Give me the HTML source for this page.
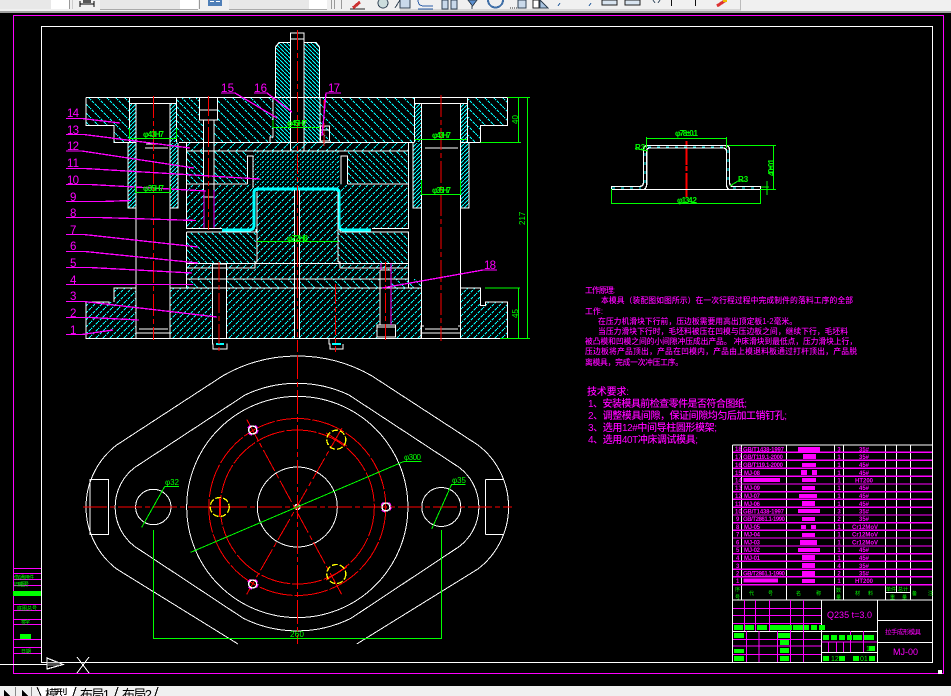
<!DOCTYPE html>
<html><head><meta charset="utf-8"><style>
html,body{margin:0;padding:0;background:#000;width:951px;height:696px;overflow:hidden}
svg{display:block}
text{font-family:"Liberation Sans","Noto Sans CJK SC",sans-serif}
.w{stroke:#fff;fill:none;stroke-width:1.2}
.g{fill:#0f0;font-size:8px}
.gs{fill:#0f0;font-size:5px}
.m{fill:#f0f;font-size:11.5px}
.t{fill:#f0f;font-size:7.8px;font-weight:500}
.r{fill:#f0f;font-size:10px;font-weight:500}
.c{fill:#f0f;font-size:6px;font-weight:bold}
.q{text-anchor:middle}
</style></head><body>
<svg width="951" height="696" viewBox="0 0 951 696" xmlns="http://www.w3.org/2000/svg" shape-rendering="crispEdges">
<defs>
<pattern id="a7" width="7" height="7" patternUnits="userSpaceOnUse"><path d="M-1,8L8,-1" stroke="#0ff" stroke-dasharray="3 1"/></pattern>
<pattern id="b7" width="7" height="7" patternUnits="userSpaceOnUse"><path d="M-1,-1L8,8" stroke="#0ff" stroke-dasharray="3 1"/></pattern>
<pattern id="a9" width="9" height="9" patternUnits="userSpaceOnUse"><path d="M-1,10L10,-1" stroke="#0ff" stroke-dasharray="3 1"/></pattern>
<pattern id="b9" width="9" height="9" patternUnits="userSpaceOnUse"><path d="M-1,-1L10,10" stroke="#0ff" stroke-dasharray="3 1"/></pattern>
<pattern id="a5" width="5" height="5" patternUnits="userSpaceOnUse"><path d="M-1,6L6,-1" stroke="#0ff" stroke-dasharray="3 1"/></pattern>
<pattern id="a4" width="4" height="4" patternUnits="userSpaceOnUse"><path d="M-1,5L5,-1" stroke="#0ff"/></pattern>
<pattern id="b4" width="4" height="4" patternUnits="userSpaceOnUse"><path d="M-1,-1L5,5" stroke="#0ff"/></pattern>
</defs>
<rect width="951" height="696" fill="#000"/>

<!-- toolbar -->
<rect width="951" height="11" fill="#f0f0f0"/>
<rect y="11" width="951" height="2" fill="#a0a0a0"/>
<rect y="0" width="51" height="9" fill="#e8e8e8"/><rect x="51" width="18" height="9" fill="#fff"/>
<path d="M69.500,0V9" stroke="#999"/><path d="M72.500,0V9" stroke="#ccc"/>
<path d="M80,4H94M80,1V7M94,1V7" stroke="#000"/><rect x="83" y="0" width="8" height="3" fill="#555"/>
<rect x="100" width="80" height="9" fill="#e8e8e8"/><rect x="180" width="18" height="9" fill="#fff"/>
<path d="M100,9.500H198" stroke="#aaa"/><path d="M199.500,0V9" stroke="#999"/>
<rect x="208" y="0" width="14" height="6" fill="#4f7fb8"/><rect x="210" y="1" width="4" height="1" fill="#fff"/><rect x="216" y="1" width="4" height="1" fill="#fff"/>
<rect x="229" width="80" height="9" fill="#e8e8e8"/><rect x="309" width="18" height="9" fill="#fff"/>
<path d="M229,9.500H327" stroke="#aaa"/><path d="M331.500,0V9M334.500,0V9M341.500,0V9" stroke="#999"/>
<path d="M350,9H365" stroke="#222"/><path d="M353,8L360,2" stroke="#c33" stroke-width="3"/>
<circle cx="383" cy="3" r="5" fill="#cdd" stroke="#345"/>
<path d="M395,8L400,0" stroke="#345"/>
<path d="M400,0V8H410V0" fill="#c9d9ea" stroke="#345"/>
<path d="M418,9H433M418,0Q418,6 424,6H433" fill="none" stroke="#2a5da8"/>
<rect x="442" y="0" width="6" height="9" fill="#c9d9ea" stroke="#345"/><rect x="451" y="0" width="6" height="9" fill="#c9d9ea" stroke="#345"/>
<path d="M468,0H477L472.500,6ZM472,6V9" fill="#5b8fd0" stroke="#345"/>
<path d="M488,0A7.500,7.500 0 0 0 503,0" fill="none" stroke="#4070a8" stroke-width="2"/>
<rect x="518" y="0" width="8" height="8" fill="#c9d9ea" stroke="#345"/><path d="M510,8H518" stroke="#333" stroke-dasharray="1 1"/>
<rect x="533" y="0" width="6" height="8" fill="#fff" stroke="#222"/><path d="M540,0L548,8H540Z" fill="#a9c4e0" stroke="#345"/>
<path d="M560,3L558,6M591,3L589,6" stroke="#4070a8"/>
<rect x="602" y="0" width="15" height="5" fill="#d8e4f0" stroke="#222"/><rect x="625" y="0" width="15" height="5" fill="#d8e4f0" stroke="#222"/>
<path d="M653,0L655,3M660,0L658,3" stroke="#567"/>
<path d="M671.500,0V6M695.500,0V6" stroke="#111"/>
<path d="M717,6L726,0" stroke="#d33" stroke-width="3"/><rect x="723" y="0" width="4" height="2" fill="#eb0"/>
<path d="M740.500,0V10H400" fill="none" stroke="#bbb"/>

<!-- outer frames -->
<path d="M13.500,673.500V15.500H943.500V673.500Z" fill="none" stroke="#f0f" stroke-width="1.300"/>
<path d="M41.500,662.500V26.500H932.500V662.500Z" fill="none" stroke="#fff" stroke-width="1.300"/>
<path d="M0,664.500H47" stroke="#fff"/>
<rect x="938" y="670" width="4" height="4" fill="#fff"/>

<!-- hatches of the section -->
<polygon points="86,97.500 129,97.500 129,142.500 114,142.500 114,125.600 86,125.600" fill="url(#b9)"/>
<rect x="129" y="103" width="7" height="39" fill="url(#a4)"/>
<rect x="170" y="103" width="7" height="39" fill="url(#a4)"/>
<rect x="128" y="143" width="8" height="65" fill="url(#a4)"/>
<rect x="170" y="143" width="8" height="65" fill="url(#a4)"/>
<rect x="177" y="97.500" width="22" height="45" fill="url(#b7)"/>
<rect x="177" y="120" width="26" height="22.500" fill="url(#b7)"/>
<rect x="214" y="97.500" width="59" height="45" fill="url(#b9)"/>
<polygon points="275.500,47 279,42.500 290.500,42.500 290.500,142.500 275.500,142.500" fill="url(#b4)"/>
<polygon points="304,42.500 316,42.500 319.500,47 319.500,142.500 304,142.500" fill="url(#b4)"/>
<rect x="320" y="97.500" width="94.500" height="45" fill="url(#b9)"/>
<rect x="414.500" y="103" width="7" height="39" fill="url(#a4)"/>
<rect x="460.500" y="103" width="7" height="39" fill="url(#a4)"/>
<rect x="413" y="143" width="8.500" height="65" fill="url(#a4)"/>
<rect x="460.500" y="143" width="8" height="65" fill="url(#a4)"/>
<polygon points="467.500,97.500 507.500,97.500 507.500,125.600 480.500,125.600 480.500,142.500 467.500,142.500" fill="url(#b9)"/>
<rect x="187" y="143" width="221" height="8" fill="url(#a9)"/>
<rect x="187" y="151" width="60" height="33" fill="url(#b7)"/>
<rect x="253" y="151" width="87" height="37" fill="url(#a5)"/>
<rect x="348" y="151" width="60" height="33" fill="url(#b7)"/>
<rect x="187" y="184" width="66" height="44.500" fill="url(#a7)"/>
<rect x="340" y="184" width="68" height="44.500" fill="url(#a7)"/>
<rect x="257" y="190" width="81" height="89" fill="url(#a7)"/>
<rect x="187" y="232" width="70" height="31" fill="url(#b7)"/>
<rect x="338" y="232" width="70" height="31" fill="url(#b7)"/>
<rect x="187" y="264" width="70" height="15" fill="url(#a7)"/>
<rect x="338" y="264" width="70" height="15" fill="url(#a7)"/>
<rect x="187" y="279" width="234" height="9" fill="url(#b9)"/>
<rect x="170" y="288" width="251" height="50.500" fill="url(#a7)"/>
<polygon points="86,302 114,302 114,288 135.500,288 135.500,338.500 86,338.500" fill="url(#a7)"/>
<polygon points="460.500,288 480.500,288 480.500,305.500 485.500,305.500 485.500,302 507.500,302 507.500,338.500 460.500,338.500" fill="url(#a7)"/>

<!-- black holes over hatches -->
<rect x="199.500" y="98" width="18" height="22" fill="#000"/>
<rect x="203.500" y="120" width="10.500" height="108" fill="#000"/>
<rect x="247.500" y="156" width="5.500" height="28" fill="#000"/>
<rect x="341" y="156" width="6.500" height="28" fill="#000"/>
<rect x="213" y="263.500" width="13.500" height="75" fill="#000"/>
<rect x="380" y="270" width="11" height="68" fill="#000"/>
<rect x="377" y="325" width="19" height="13" fill="#000"/>
<rect x="294.500" y="190" width="5" height="148" fill="#000"/>

<!-- workpiece -->
<path d="M222,230H249Q254,230 254,225V193Q254,189 258,189H335Q339,189 339,193V225Q339,230 344,230H371" fill="none" stroke="#0ff" stroke-width="3"/>

<!-- section outlines -->
<path class="w" d="M86,97.500H467.500M467.500,97.500H507.500V125.600H480.500V142.500H460.500M86,97.500V125.600H114V142.500H136M129.500,97.500V142.500M136,103.500H170V142.500M136,103.500V338.500M176.500,97.500V142.500M170,142.500V338.500M129,103.500H176.500"/>
<path class="w" d="M128,143V208H136M178,143V208H170M179,142.500H414M145,148H168M146,144H158"/>
<path class="w" d="M199.500,97.500V120H217.500V97.500M199.500,110H217.500M203.500,120V190M214,120V190M203,197H214"/>
<path class="w" d="M273,97.500V137H270V142.500M290.500,33H304V151H290.500ZM275.500,97V47L279,42.500H290.500M304,42.500H316L319.500,47V97.500M320,97.500V142.500M290.500,39H304"/>
<path class="w" d="M320.500,126H329.500V141H320.500ZM320.500,130H329.500"/>
<path class="w" d="M414.500,97.500V142.500M421.500,103.500V338.500M460.500,103.500V338.500M467.500,97.500V142.500M414.500,103.500H467.500M413,143V208H421M469,143V208H460M425,148H458"/>
<path class="w" d="M186.500,142.500V228.500H222M186.500,151H290M304,151H408.500M408.500,142.500V228.500H372M247.500,184V156H253V188M341,184V156H347.500V184M186.500,184H247.500M347.500,184H408.500"/>
<path class="w" d="M186.500,232H256V229M340,229V232H408.500V263.500M186.500,232V288M186.500,263.500H408.500M186.500,279H408.500M408.500,263.500V288"/>
<path class="w" d="M257,192V262M338,192V262M257,262H255V268H186.500M338,262H340V268H408.500"/>
<path class="w" d="M294.500,190V338.500M299.500,190V338.500"/>
<path class="w" d="M114,302V288H135.500M170,288H421M460.500,288H480.500V305.500H485.500V302H507.500V338.500H86V302H109V305.500M136,333H170M139,329H168M421.500,333H460.500M425,329H458M421,338.500V326H424M460.500,326H458"/>
<path class="w" d="M212.500,263.500V338.500M226.500,263.500V338.500M212.500,264H226.500M380,270H391M380,270V325M391,270V325M377,325H395.500V337H377ZM377,327H395.500"/>
<path class="w" d="M212.500,339V344H213V349H227V344H226.500M329,339V344H330V349H343V344"/>
<path d="M216,344H224M332,344H341" stroke="#0ff" stroke-width="2"/>
<path d="M381,263V270M391,263V325" stroke="#f0f" stroke-width="1.300"/>
<path d="M204,190V228M214,190V228" stroke="#f0f" stroke-width="1.300"/>

<!-- red centre lines -->
<g stroke="#f00" fill="none">
<path d="M153.500,96V340M441,95V341" stroke-dasharray="22 3 5 3"/>
<path d="M208.500,96V230M219,262V351M297.500,30V352M335.500,284V352M385.500,262V340M324,100V146" stroke-dasharray="20 3 5 3"/>
<path d="M686.500,141V165M686.500,166V171M686.500,173V197" stroke-width="1.600"/>
</g>

<!-- magenta leaders and numbers -->
<g stroke="#f0f" stroke-width="1.300" fill="none">
<path d="M66,118.500H82L120,123"/><path d="M66,134.500H84L190,148"/><path d="M66,151H82L194,168"/>
<path d="M66,168.500H85L260,179"/><path d="M66,184.500H90L206,191"/><path d="M66,201.500H103L131,200.500"/>
<path d="M66,217.500H99L196,220.500"/><path d="M66,234.500H84L198,247"/><path d="M66,251.500H85L198,263"/>
<path d="M66,267.500H90L192,273"/><path d="M66,284.500H193"/><path d="M66,301.500H84L217,317"/>
<path d="M66,317.500H90L139,320"/><path d="M66,334.500H82L113,330"/>
<path d="M221,93H235L277,118"/><path d="M254,93H267L292,112"/><path d="M341,93H326L322,136"/>
<path d="M497,270H483L382,288"/>
</g>
<text x="67" y="117" class="m" textLength="12">14</text><text x="67" y="134" class="m" textLength="12">13</text><text x="67" y="150" class="m" textLength="12">12</text>
<text x="67" y="167" class="m" textLength="12">11</text><text x="67" y="184" class="m" textLength="12">10</text><text x="70" y="201" class="m">9</text>
<text x="70" y="217" class="m">8</text><text x="70" y="234" class="m">7</text><text x="70" y="250" class="m">6</text>
<text x="70" y="267" class="m">5</text><text x="70" y="284" class="m">4</text><text x="70" y="300" class="m">3</text>
<text x="70" y="317" class="m">2</text><text x="70" y="334" class="m">1</text>
<text x="221" y="92" class="m" textLength="13">15</text><text x="254" y="92" class="m" textLength="13">16</text><text x="328" y="92" class="m" textLength="12">17</text><text x="484" y="269" class="m" textLength="12">18</text>

<!-- green section dims -->
<g stroke="#0f0" fill="none">
<path d="M129.500,128V138.500H176.500V128M135.500,186V192.500H170.500V186M273,120V127.500H320"/>
<path d="M414.500,139.500H467M421.500,180V194.500H460.500V180"/>
<path d="M518.500,97.500V142.500M527.500,97.500V338.500M518.500,288V338.500M507.500,97.500H530M480.500,142.500H521M485,288H520M500,338.500H530"/>
<path d="M257,241.500H338"/>
</g>
<text x="143" y="137" class="g" textLength="21" font-weight="bold">φ43H7</text>
<text x="143" y="191" class="g" textLength="21" font-weight="bold">φ35H7</text>
<text x="287" y="126" class="g" textLength="20" font-weight="bold">φ45H7</text>
<text x="432" y="138" class="g" textLength="19" font-weight="bold">φ43H7</text>
<text x="432" y="193" class="g" textLength="19" font-weight="bold">φ35H7</text>
<text x="287" y="241" class="g" textLength="21" font-weight="bold">φ72H8</text>
<text transform="translate(518,124) rotate(-90)" class="g">40</text>
<text transform="translate(525,225) rotate(-90)" class="g">217</text>
<text transform="translate(518,318) rotate(-90)" class="g">45</text>

<!-- part profile -->
<g fill="none" stroke="#fff" stroke-width="1.300">
<path d="M611.500,189.500V186.500H640Q643.500,186 643.500,182V150Q643.500,145.500 648,145.500H725Q729.500,145.500 729.500,150V182Q729.500,186.500 733,186.500H760.500V189.500"/>
<path d="M611.500,189.500H760.500M644,189.500Q646.700,188 646.700,184V151Q646.700,148 650,148H723Q726.500,148 726.500,151V184Q726.500,188 729,189.500"/>
</g>
<path d="M612,188H641M645,183V150M648,147H725M728,150V183M733,188H760" stroke="#0ff" stroke-dasharray="3 6" fill="none"/>
<g fill="none" stroke="#0f0">
<path d="M646.500,137V148M726.500,137V148M646,138.500H727M611.500,189V204M760.500,189V204M611,203.500H761M728,145.500H776M761,189.500H776M773.500,145.500V189.500M767,181V195M761,187H769"/>
<path d="M635,148.500L648,151M730,186L738,181H745"/>
</g>
<text x="675" y="136" class="g" textLength="23" font-weight="bold">φ78±0.1</text>
<text x="677" y="203" class="g" textLength="20" font-weight="bold">φ134.2</text>
<text x="635" y="150" class="g" font-weight="bold">R3</text>
<text x="738" y="182" class="g" font-weight="bold">R3</text>
<text transform="translate(774,176) rotate(-90)" class="g" textLength="17" font-weight="bold">40±0.1</text>

<!-- notes -->
<text x="585" y="293" class="t" textLength="30">工作原理:</text>
<text x="601" y="303" class="t" textLength="252">本模具（装配图如图所示）在一次行程过程中完成制件的落料工序的全部</text>
<text x="585" y="314" class="t" textLength="18">工作:</text>
<text x="598" y="324" class="t" textLength="199">在压力机滑块下行前，压边板需要用高出顶定板1-2毫米。</text>
<text x="598" y="334" class="t" textLength="250">当压力滑块下行时，毛坯料被压在凹模与压边板之间，继续下行，毛坯料</text>
<text x="585" y="344" class="t" textLength="272">被凸模和凹模之间的小间隙冲压成出产品。 冲床滑块到最低点，压力滑块上行，</text>
<text x="585" y="354" class="t" textLength="272">压边板将产品顶出，产品在凹模内，产品由上模退料板通过打杆顶出，产品脱</text>
<text x="585" y="365" class="t" textLength="98">离模具，完成一次冲压工序。</text>
<text x="587" y="395" class="r" textLength="42">技术要求:</text>
<text x="588" y="407" class="r" textLength="159">1、安装模具前检查零件是否符合图纸;</text>
<text x="588" y="419" class="r" textLength="199">2、调整模具间隙，保证间隙均匀后加工销钉孔;</text>
<text x="588" y="431" class="r" textLength="129">3、选用12#中间导柱圆形模架;</text>
<text x="588" y="443" class="r" textLength="110">4、选用40T冲床调试模具;</text>

<!-- plan view -->
<g fill="none" stroke="#fff">
<path d="M238,644L116.700,569A78,78 0 0 1 116.700,445L223,375.700A150,150 0 0 1 371.600,375.700L477.900,445A78,78 0 0 1 477.900,569L356.700,644"/>
<path d="M243.300,618.300L135,546.700A49.600,49.600 0 0 1 135,467.300L245,395A121.500,121.500 0 0 1 349,395L459,467.300A49.600,49.600 0 0 1 459,546.700L351,618.300A121.500,121.500 0 0 1 243.300,618.300Z"/>
<circle cx="297.300" cy="507" r="110.600"/>
<circle cx="297.300" cy="507" r="40"/>
<circle cx="153.300" cy="507" r="17.700"/>
<circle cx="441.300" cy="507" r="19.500"/>
<path d="M108.300,479.500H90V534.500H108.300ZM485.700,479.500H503.300M485.700,534.500H503.300M485.700,479.500V534.500"/>
<circle cx="297.300" cy="507" r="2.500" stroke-width="1.500"/>
</g>
<g fill="none" stroke="#f00">
<circle cx="297.300" cy="507" r="88.500" stroke-dasharray="34 2"/>
<circle cx="297.300" cy="507" r="77" stroke-dasharray="30 2"/>
<path d="M83,507H512M297.300,355V644" stroke-dasharray="24 3 5 3"/>
<path d="M246.700,419.300L342,595M342,428L246.700,594.300" stroke-dasharray="24 3 5 3"/>
<path d="M207,507H232M219.700,497V517M326,433L347,446M326,580L347,567"/>
</g>
<g fill="none">
<circle cx="336.300" cy="439.700" r="9.500" stroke="#ff0" stroke-width="1.300" stroke-dasharray="6 2"/>
<circle cx="219.700" cy="507" r="9.500" stroke="#ff0" stroke-width="1.300" stroke-dasharray="6 2"/>
<circle cx="336.300" cy="574" r="9.500" stroke="#ff0" stroke-width="1.300" stroke-dasharray="6 2"/>
<circle cx="252.700" cy="430" r="4" stroke="#fff" stroke-width="1.400"/>
<circle cx="386" cy="507" r="4" stroke="#fff" stroke-width="1.400"/>
<circle cx="252.700" cy="584" r="4" stroke="#fff" stroke-width="1.400"/>
<circle cx="252.700" cy="430" r="5.200" stroke="#f0f" stroke-dasharray="4 5"/>
<circle cx="386" cy="507" r="5.200" stroke="#f0f" stroke-dasharray="4 5"/>
<circle cx="252.700" cy="584" r="5.200" stroke="#f0f" stroke-dasharray="4 5"/>
</g>
<g fill="none" stroke="#0f0">
<path d="M190.700,552.300L403.300,461.700"/>
<path d="M403.300,461.500H421.700M165,486.500H179M451.700,484.500H465.700"/>
<path d="M141.700,527.300L165,486"/>
<path d="M431.700,529L451.700,484.300"/>
<path d="M153.500,530V638.500H441.500V530" stroke-width="1.200"/>
</g>
<text x="404" y="460" class="g" textLength="17">φ300</text>
<text x="165" y="485" class="g" textLength="14">φ32</text>
<text x="452" y="483" class="g" textLength="14">φ35</text>
<text x="290" y="637" class="g" textLength="14">260</text>

<!-- parts table -->
<g stroke="#fff" fill="none" stroke-width="1.200">
<path d="M732.500,445H932.500M732.500,445V662.500M741.500,445V600M786.500,445V600M834.500,445V600M843.500,445V600M885.500,445V600M896.500,445V592.500M910.500,445V600M885.500,592.500H910.500M732.500,600H932.500M732.500,662.500H932.500"/>
<path d="M821.500,600V662.500M877.500,600V662.500M877.500,620.500H932.500M877.500,642.500H932.500M821.500,631.500H877.500M821.500,652.500H877.500M733,631.500H821"/>
</g>
<g stroke="#f0f" fill="none" stroke-width="1.200">
<path d="M733,452.300H932M733,460.300H932M733,468.300H932M733,476.300H932M733,484H932M733,491.700H932M733,499.300H932M733,507.300H932M733,515H932M733,522.700H932M733,530.300H932M733,538H932M733,546H932M733,553.700H932M733,561.300H932M733,569.300H932M733,576.700H932M733,584.700H932"/>
<path d="M733,608.500H821M733,615.500H821M733,623.500H821M733,639.500H821M733,646H821M733,654.500H821"/>
<path d="M744.500,600V631M755.500,600V631M769.500,600V631M790.500,600V662M803.500,600V662M746.500,631V662M759,631V662M777.500,631V662"/>
<path d="M821.500,642H877M850.500,631V652M863.500,631V652M828.500,642V652M836.500,642V652M843.500,642V652"/>
</g>
<text x="735" y="451" class="c" font-size="5.500">18</text><text x="743" y="451.500" class="c" textLength="41">GB/T1438-1997</text>
<text x="735" y="459" class="c" font-size="5.500">17</text><text x="743" y="459" class="c" textLength="40">GB/T119.1-2000</text>
<text x="735" y="467" class="c" font-size="5.500">16</text><text x="743" y="467" class="c" textLength="40">GB/T119.1-2000</text>
<text x="735" y="475" class="c" font-size="5.500">15</text><text x="744" y="475" class="c" textLength="16">MJ-08</text>
<text x="735" y="482.500" class="c" font-size="5.500">14</text>
<text x="735" y="490" class="c" font-size="5.500">13</text><text x="744" y="490" class="c" textLength="16">MJ-09</text>
<text x="735" y="498" class="c" font-size="5.500">12</text><text x="744" y="498" class="c" textLength="16">MJ-07</text>
<text x="735" y="506" class="c" font-size="5.500">11</text><text x="744" y="506" class="c" textLength="16">MJ-06</text>
<text x="735" y="513.500" class="c" font-size="5.500">10</text><text x="743" y="513.500" class="c" textLength="41">GB/T1438-1997</text>
<text x="736" y="521" class="c" font-size="5.500">9</text><text x="743" y="521" class="c" textLength="42">GB/T2861.1-1990</text>
<text x="736" y="529" class="c" font-size="5.500">8</text><text x="744" y="529" class="c" textLength="16">MJ-05</text>
<text x="736" y="536.500" class="c" font-size="5.500">7</text><text x="744" y="536.500" class="c" textLength="16">MJ-04</text>
<text x="736" y="544.500" class="c" font-size="5.500">6</text><text x="744" y="544.500" class="c" textLength="16">MJ-03</text>
<text x="736" y="552" class="c" font-size="5.500">5</text><text x="744" y="552" class="c" textLength="16">MJ-02</text>
<text x="736" y="560" class="c" font-size="5.500">4</text><text x="744" y="560" class="c" textLength="16">MJ-01</text>
<text x="736" y="568" class="c" font-size="5.500">3</text>
<text x="736" y="575.500" class="c" font-size="5.500">2</text><text x="743" y="575.500" class="c" textLength="42">GB/T2861.1-1990</text>
<text x="736" y="583" class="c" font-size="5.500">1</text>
<g fill="#f0f">
<rect x="743.300" y="478" width="36.700" height="4"/><rect x="743.300" y="578.500" width="34.700" height="4"/>
<rect x="798" y="447" width="22" height="4.500"/><rect x="803" y="454" width="13" height="5"/><rect x="802" y="463" width="14" height="4"/>
<rect x="801" y="470" width="6" height="5"/><rect x="812" y="470" width="5" height="5"/><rect x="802" y="478" width="14" height="4"/>
<rect x="802" y="486" width="13" height="4"/><rect x="799" y="494" width="18" height="4"/><rect x="802" y="501" width="13" height="5"/>
<rect x="798" y="509" width="22" height="4"/><rect x="802" y="517" width="13" height="4"/><rect x="801" y="525" width="5" height="4"/>
<rect x="811" y="525" width="5" height="4"/><rect x="802" y="533" width="13" height="4"/><rect x="800" y="540" width="17" height="5"/>
<rect x="798" y="548" width="22" height="4"/><rect x="802" y="555" width="13" height="5"/><rect x="802" y="563" width="13" height="5"/>
<rect x="802" y="571" width="13" height="5"/><rect x="802" y="579" width="13" height="4"/>
</g>
<text x="839" y="451.500" class="c q">3</text><text x="864" y="451.500" class="c q">35#</text>
<text x="839" y="459" class="c q">1</text><text x="864" y="459" class="c q">35#</text>
<text x="839" y="467" class="c q">1</text><text x="864" y="467" class="c q">45#</text>
<text x="839" y="475" class="c q">1</text><text x="864" y="475" class="c q">45#</text>
<text x="839" y="482.500" class="c q">1</text><text x="864" y="482.500" class="c q">HT200</text>
<text x="839" y="490" class="c q">1</text><text x="864" y="490" class="c q">45#</text>
<text x="839" y="498" class="c q">1</text><text x="864" y="498" class="c q">45#</text>
<text x="839" y="506" class="c q">1</text><text x="864" y="506" class="c q">45#</text>
<text x="839" y="513.500" class="c q">3</text><text x="864" y="513.500" class="c q">35#</text>
<text x="839" y="521" class="c q">2</text><text x="864" y="521" class="c q">35#</text>
<text x="839" y="529" class="c q">1</text><text x="865" y="529" class="c q">Cr12MoV</text>
<text x="839" y="536.500" class="c q">1</text><text x="865" y="536.500" class="c q">Cr12MoV</text>
<text x="839" y="544.500" class="c q">1</text><text x="865" y="544.500" class="c q">Cr12MoV</text>
<text x="839" y="552" class="c q">1</text><text x="864" y="552" class="c q">45#</text>
<text x="839" y="560" class="c q">1</text><text x="864" y="560" class="c q">45#</text>
<text x="839" y="568" class="c q">4</text><text x="864" y="568" class="c q">35#</text>
<text x="839" y="575.500" class="c q">2</text><text x="864" y="575.500" class="c q">35#</text>
<text x="839" y="583" class="c q">1</text><text x="864" y="583" class="c q">HT200</text>
<!-- table header -->
<text x="735" y="591" class="gs">序</text><text x="735" y="599" class="gs">号</text>
<text x="749" y="595" class="gs">代</text><text x="768" y="595" class="gs">号</text>
<text x="796" y="595" class="gs">名</text><text x="816" y="595" class="gs">称</text>
<text x="836" y="592" class="gs">数</text><text x="836" y="599" class="gs">量</text>
<text x="855" y="595" class="gs">材</text><text x="868" y="595" class="gs">料</text>
<text x="886" y="591" class="gs">单件</text><text x="898" y="591" class="gs">总计</text>
<text x="890" y="599" class="gs">重</text><text x="902" y="599" class="gs">量</text>
<text x="912" y="595" class="gs">备</text><text x="928" y="595" class="gs">注</text>
<!-- title block -->
<g fill="#0f0">
<rect x="734" y="625" width="9" height="5"/><rect x="745" y="625" width="9" height="5"/><rect x="757" y="625" width="10" height="5"/><rect x="770" y="625" width="22" height="5"/><rect x="793" y="625" width="10" height="5"/><rect x="804" y="625" width="5" height="5"/><rect x="811" y="625" width="6" height="5"/><rect x="819" y="625" width="6" height="5"/>
<rect x="734" y="633" width="10" height="5"/><rect x="778" y="633" width="12" height="5"/><rect x="780" y="640" width="9" height="5"/><rect x="780" y="648" width="9" height="5"/><rect x="734" y="649" width="10" height="4"/><rect x="734" y="656" width="10" height="5"/><rect x="780" y="656" width="9" height="5"/>
<rect x="823" y="635" width="6" height="5"/><rect x="831" y="635" width="6" height="5"/><rect x="839" y="635" width="6" height="5"/><rect x="847" y="635" width="5" height="5"/><rect x="853" y="635" width="9" height="5"/><rect x="864" y="635" width="10" height="5"/>
<rect x="823" y="656" width="6" height="5"/><rect x="839" y="656" width="6" height="5"/><rect x="853" y="656" width="6" height="5"/><rect x="869" y="656" width="6" height="5"/><rect x="869" y="646" width="6" height="5"/>
</g>
<text x="831" y="661" fill="#0f0" font-size="7">12</text>
<text x="860" y="661" fill="#0f0" font-size="7">01</text>
<text x="866" y="651" fill="#0f0" font-size="7">1</text>
<text x="827" y="618" fill="#f0f" font-size="9" textLength="45">Q235 t=3.0</text>
<text x="885" y="634" fill="#f0f" font-size="6.500" textLength="36">拉手成形模具</text>
<text x="893" y="655" fill="#f0f" font-size="9" textLength="25">MJ-00</text>

<!-- left strip -->
<g stroke="#f0f" fill="none" stroke-width="1.200">
<path d="M13,568.500H41M13,573.500H41M13,579.500H41M13,585.500H41M13,604.500H41M13,610.500H41M13,619.500H41M13,624.500H41M13,639.500H41M13,647.500H41M13,653.500H41"/>
</g>
<rect x="13" y="591" width="28" height="5" fill="#0f0"/>
<rect x="20" y="634" width="11" height="5" fill="#0f0"/>
<text x="14" y="579" class="gs" textLength="20">借(通)用件</text>
<text x="14" y="586" class="gs" textLength="15">旧底图号</text>
<text x="17" y="610" class="gs" textLength="20">底图总号</text>
<text x="21" y="624" class="gs" textLength="9">签字</text>
<text x="21" y="653" class="gs" textLength="10">日期</text>

<!-- UCS icon + x -->
<path d="M47,658L63,664.500L47,669Z" fill="none" stroke="#fff" stroke-width="1.200"/>
<path d="M47,663H60M47,665H60" stroke="#999"/>
<path d="M77,657L89,673M89,657L77,673" stroke="#fff"/>

<!-- bottom tab bar -->
<rect y="686" width="951" height="10" fill="#f0f0f0"/>
<path d="M4,690L10,696H4ZM22,690L28,696H22Z" fill="#000"/><path d="M15.500,687V696M31.500,687V696" stroke="#888"/>
<rect x="40" y="687" width="34" height="9" fill="#fff"/>
<path d="M37,687L41,696M76,687L73,696M118,687L115,696M158,687L155,696" stroke="#000"/>
<g font-size="13" fill="#000">
<text x="45" y="699" textLength="23">模型</text>
<text x="80" y="699" textLength="30">布局1</text>
<text x="122" y="699" textLength="30">布局2</text>
</g>
</svg>
</body></html>
